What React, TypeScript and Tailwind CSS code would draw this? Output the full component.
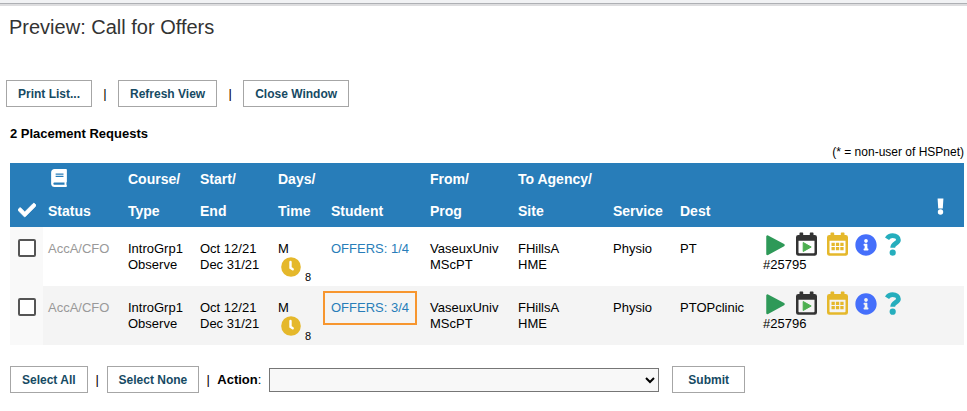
import type { ReactNode } from "react";
import { FaBook, FaCheck, FaInfoCircle } from "react-icons/fa";

const rows = [
  { id: "25795", offers: "OFFERS: 1/4", dest: "PT", marked: false },
  { id: "25796", offers: "OFFERS: 3/4", dest: "PTOPclinic", marked: true },
];

function Button({ children, wide = false }: { children: ReactNode; wide?: boolean }) {
  return (
    <button
      type="button"
      className={`h-[27px] whitespace-nowrap border border-[#a6a6a6] bg-white text-xs font-bold text-[#164a63] ${wide ? "px-[15px]" : "px-[11px]"}`}
    >
      {children}
    </button>
  );
}

function Clock() {
  return (
    <svg viewBox="0 0 20 20" className="size-5 shrink-0" aria-hidden="true">
      <circle cx="10" cy="10" r="9.800" fill="#e5b82b" />
      <path d="M9.500 5v5.800l2.200 1.500" fill="none" stroke="#fff" strokeWidth="2.400" strokeLinecap="round" />
    </svg>
  );
}

function Calendar({ color, children }: { color: string; children: ReactNode }) {
  return (
    <svg viewBox="0 0 21 24" className="h-6 w-[21px]" aria-hidden="true">
      <path
        fill={color}
        fillRule="evenodd"
        d="M2.300 3H3.500V1.200q0-.7.7-.7h2.300q.7 0 .7.700V3h6.600V1.200q0-.7.7-.7h2.300q.7 0 .7.700V3h1.200Q21 3 21 5.300V21.400Q21 23.700 18.700 23.700H2.300Q0 23.700 0 21.400V5.300Q0 3 2.300 3ZM2.500 8.800V20.500Q2.500 21.200 3.200 21.200H17.800Q18.500 21.200 18.500 20.500V8.800Z"
      />
      {children}
    </svg>
  );
}

function RowIcons() {
  return (
    <div className="flex h-6 items-end">
      <button type="button" aria-label="Start" className="ml-[3px] w-[30px]">
        <svg viewBox="0 0 20 24" className="h-6 w-5" aria-hidden="true">
          <path d="M1.500 4.500v17.400L17.500 13.200Z" fill="#2e9958" stroke="#2e9958" strokeWidth="2.500" strokeLinejoin="round" />
        </svg>
      </button>
      <button type="button" aria-label="Schedule start" className="w-[31px]">
        <Calendar color="#333333">
          <path d="M7.200 10.500v9l8-4.500Z" fill="#4caf50" stroke="#4caf50" strokeLinejoin="round" />
        </Calendar>
      </button>
      <button type="button" aria-label="Calendar" className="w-7">
        <Calendar color="#e5b82b">
          <path
            d="M4.500 10.800h3.300v3.300H4.500zM8.900 10.800h3.300v3.300H8.900zM13.300 10.800h3.300v3.300h-3.300zM4.500 15h3.300v3.300H4.500zM8.900 15h3.300v3.300H8.900zM13.300 15h3.300v3.300h-3.300z"
            fill="#e5b82b"
          />
        </Calendar>
      </button>
      <button type="button" aria-label="Information" className="w-[30px]">
        <FaInfoCircle size={22} color="#456ffb" />
      </button>
      <button type="button" aria-label="Help">
        <svg viewBox="0 0 16 24" className="h-6 w-4" aria-hidden="true">
          <path
            d="M2 6.800Q4 3.700 7.600 3.700C11.200 3.700 13.400 5.300 13.400 7.900C13.400 11.300 7.700 11.200 7.700 15.800"
            fill="none"
            stroke="#25aebd"
            strokeWidth="4.800"
          />
          <circle cx="7.700" cy="20.700" r="3.100" fill="#25aebd" />
        </svg>
      </button>
    </div>
  );
}

export default function App() {
  const th = "px-[5px] pb-0 text-left align-bottom font-bold leading-8";
  const td = "px-[5px] pt-[14px] pb-[9px] align-top";
  return (
    <div className="bg-white font-['Liberation_Sans',Arial,sans-serif] text-[13px] leading-4 text-black">
      <div className="h-[6px] border-b-2 border-[#dddddf] bg-[#f1f2f4]">
        <div className="h-1 border-b border-[#aeb0b4]" />
      </div>
      <h1 className="mt-2 px-[9px] text-xl leading-[26px] text-[#333333]">Preview: Call for Offers</h1>

      <div className="mt-10 flex items-center px-[6px]">
        <Button>Print List...</Button>
        <span className="w-[26px] text-center">|</span>
        <Button>Refresh View</Button>
        <span className="w-[26px] text-center">|</span>
        <Button>Close Window</Button>
      </div>

      <main className="pl-[10px] pr-[3px]">
        <h2 className="mt-[19px] font-bold">2 Placement Requests</h2>
        <p className="text-right text-xs leading-5">(* = non-user of HSPnet)</p>

        <table className="mt-px w-full table-fixed border-collapse">
          <colgroup>
            <col className="w-[33px]" />
            <col className="w-20" />
            <col className="w-[72px]" />
            <col className="w-[78px]" />
            <col className="w-[53px]" />
            <col className="w-[99px]" />
            <col className="w-[88px]" />
            <col className="w-[95px]" />
            <col className="w-[67px]" />
            <col className="w-[83px]" />
            <col />
            <col className="w-[48px]" />
          </colgroup>
          <thead>
            <tr className="h-16 bg-[#287db9] text-sm text-white">
              <th className="pb-2 align-bottom">
                <FaCheck size={18} stroke="white" strokeWidth={24} className="mx-auto" aria-label="Selected" />
              </th>
              <th className={th}>
                <FaBook size={18} className="mb-2 ml-[2px]" />
                Status
              </th>
              <th className={th}>Course/<br />Type</th>
              <th className={th}>Start/<br />End</th>
              <th className={th}>Days/<br />Time</th>
              <th className={th}>Student</th>
              <th className={th}>From/<br />Prog</th>
              <th className={th}>To Agency/<br />Site</th>
              <th className={th}>Service</th>
              <th className={th}>Dest</th>
              <th className={th} />
              <th className="pb-3 align-bottom">
                <svg viewBox="0 0 7 17" className="mx-auto h-[17px] w-[7px]" role="img" aria-label="Alert">
                  <path d="M.6.500h5.800l-.6 10H1.200Z" fill="white" />
                  <circle cx="3.500" cy="14" r="2.700" fill="white" />
                </svg>
              </th>
            </tr>
          </thead>
          <tbody>
            {rows.map((row) => (
              <tr key={row.id} className="even:bg-[#f4f4f4]">
                <td className="bg-[#f9f9f9] pt-[12px] align-top">
                  <input
                    type="checkbox"
                    aria-label={`Select request ${row.id}`}
                    className="mx-auto block size-[18px] appearance-none rounded-[2px] border-2 border-[#555555] bg-white checked:bg-[#287db9]"
                  />
                </td>
                <td className={`${td} text-[#999999]`}>AccA/CFO</td>
                <td className={td}>IntroGrp1<br />Observe</td>
                <td className={td}>Oct 12/21<br />Dec 31/21</td>
                <td className={td}>
                  M
                  <div className="flex h-5 items-end pl-[3px]">
                    <Clock />
                    <span className="-mb-2 ml-1 text-[11px]">8</span>
                  </div>
                </td>
                <td className={td}>
                  <a
                    href="#offers"
                    className={`-mx-2 -my-[9px] inline-block whitespace-nowrap border-2 px-[6px] py-[7px] text-[#287db9] ${row.marked ? "border-[#f7962f]" : "border-transparent"}`}
                  >
                    {row.offers}
                  </a>
                </td>
                <td className={td}>VaseuxUniv<br />MScPT</td>
                <td className={td}>FHillsA<br />HME</td>
                <td className={td}>Physio</td>
                <td className={td}>{row.dest}</td>
                <td className="px-[5px] pt-[5px] align-top" colSpan={2}>
                  <RowIcons />
                  <div className="pt-px">#{row.id}</div>
                </td>
              </tr>
            ))}
          </tbody>
        </table>

        <div className="mt-[21px] flex items-center">
          <Button>Select All</Button>
          <span className="w-[19px] text-center">|</span>
          <Button>Select None</Button>
          <span className="w-[18px] text-center">|</span>
          <label htmlFor="action"><b>Action</b>:</label>
          <select id="action" className="ml-2 mr-[13px] h-6 w-[390px] border border-[#767676] bg-[#f8f8f8]">
            <option></option>
          </select>
          <Button wide>Submit</Button>
        </div>
      </main>
    </div>
  );
}
